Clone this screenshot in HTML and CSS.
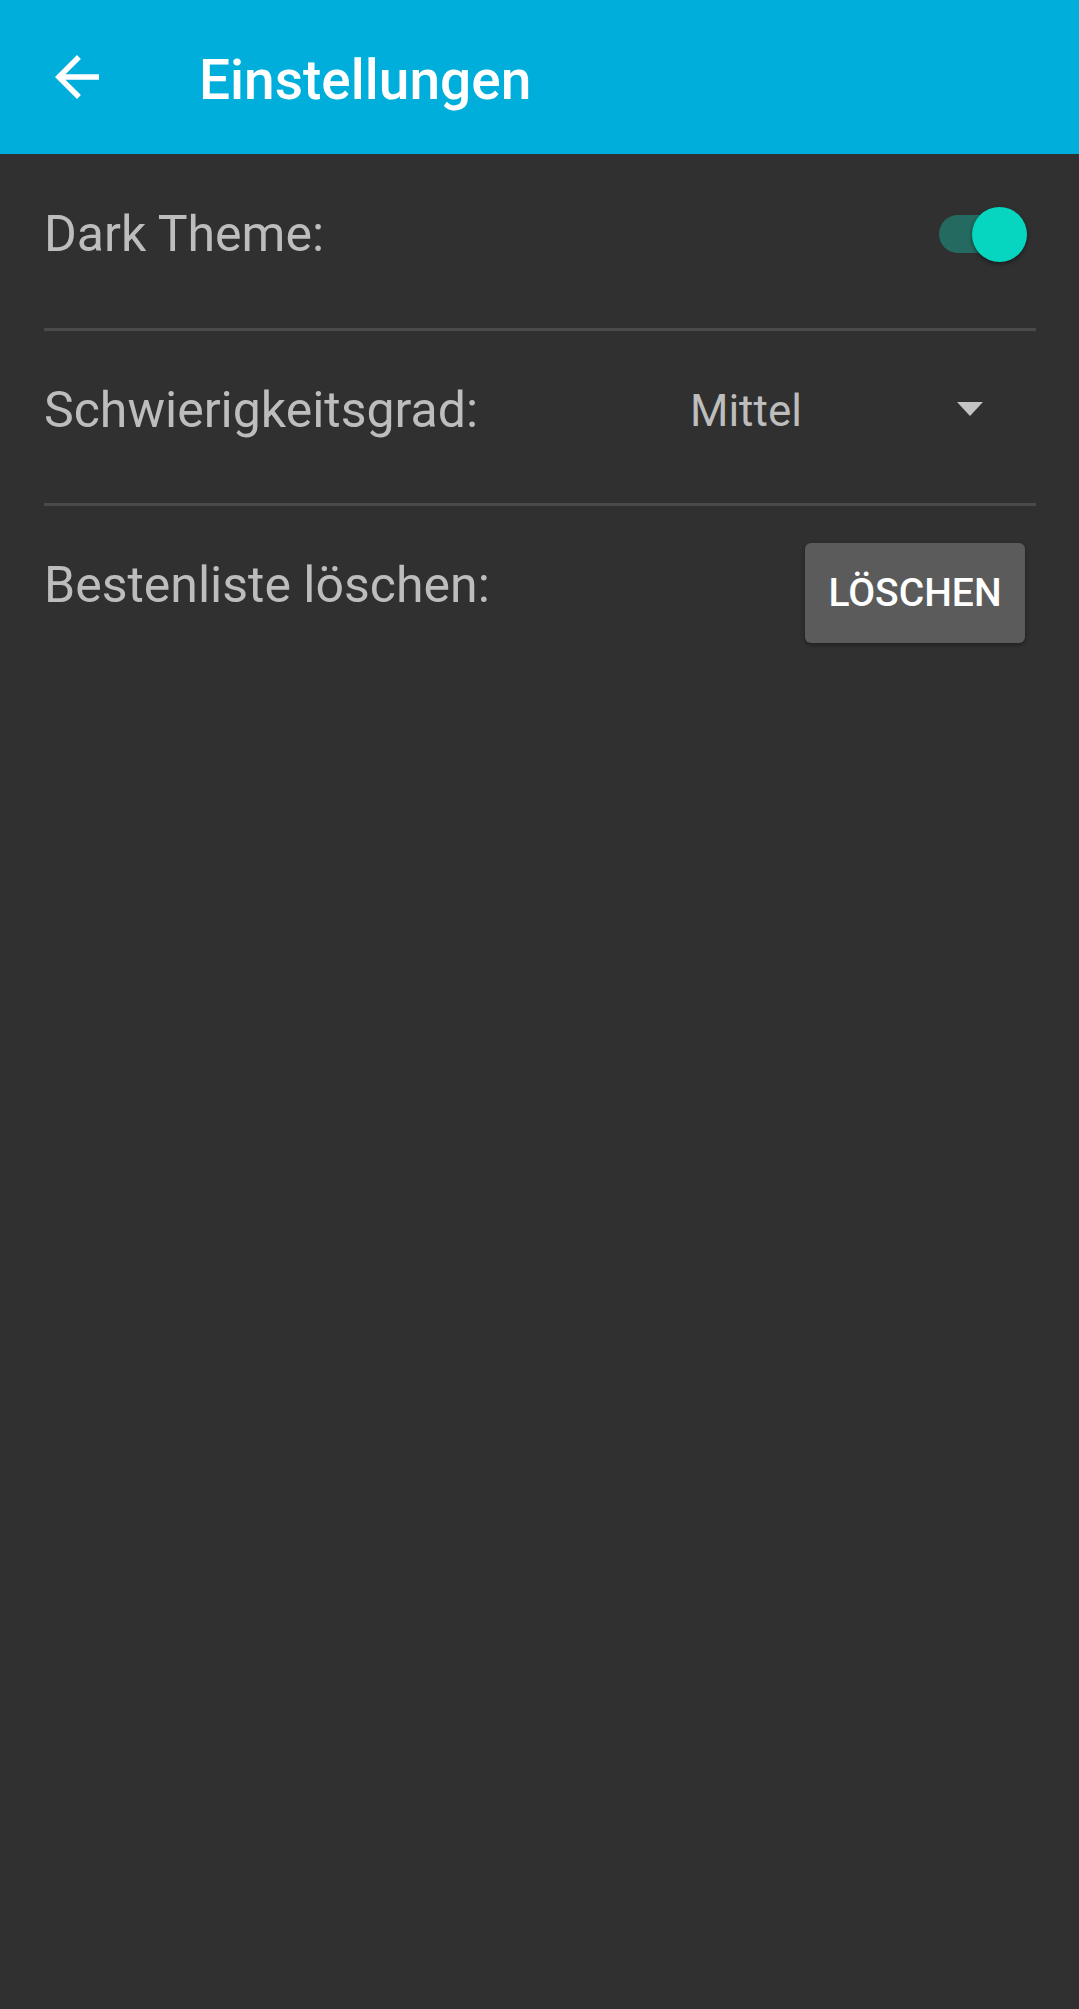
FILE: index.html
```html
<!DOCTYPE html>
<html lang="de">
<head>
<meta charset="utf-8">
<title>Einstellungen</title>
<link rel="stylesheet" href="styles.css">
</head>
<body>
<header class="toolbar">
  <span class="nav-icon">
    <svg viewBox="0 0 24 24" width="66" height="66"><path fill="#ffffff" d="M20 11H7.83l5.59-5.59L12 4l-8 8 8 8 1.41-1.41L7.83 13H20v-2z"/></svg>
  </span>
  <h1 class="title">Einstellungen</h1>
</header>
<main class="settings">
  <div class="row row-center">
    <span class="label">Dark Theme:</span>
    <span class="switch">
      <span class="track"></span>
      <span class="thumb"></span>
    </span>
  </div>
  <div class="row row-center">
    <span class="label">Schwierigkeitsgrad:</span>
    <span class="spinner">
      <span class="spinner-value">Mittel</span>
      <span class="spinner-arrow"></span>
    </span>
  </div>
  <div class="row row-top no-border">
    <span class="label label-top">Bestenliste löschen:</span>
    <button class="btn">LÖSCHEN</button>
  </div>
</main>
</body>
</html>
```

FILE: styles.css
```css
html, body {
  margin: 0;
  padding: 0;
}
body {
  background: #303030;
  font-family: Roboto, "Noto Sans", "Liberation Sans", sans-serif;
  min-height: 2009px;
}
.toolbar {
  height: 154px;
  background: #00aedb;
  display: flex;
  align-items: center;
  padding-left: 44px;
  box-sizing: border-box;
}
.nav-icon {
  width: 66px;
  height: 66px;
  display: block;
}
.nav-icon svg {
  display: block;
}
.title {
  margin: 6px 0 0 89px;
  font-size: 55px;
  font-weight: 500;
  color: #ffffff;
  line-height: normal;
}
.settings {
  padding: 0 43px 0 44px;
}
.row {
  display: flex;
  border-bottom: 3px solid #4a4a4a;
}
.row.no-border {
  border-bottom: none;
}
.row-center {
  align-items: center;
  padding: 51px 0 65px;
  height: 58px;
}
.row-center + .row-center {
  padding-top: 50px;
  padding-bottom: 64px;
}
.row-top {
  align-items: flex-start;
}
.label {
  font-size: 50px;
  color: #bdbdbd;
  line-height: 58px;
  white-space: nowrap;
}
.label-top {
  margin-top: 50px;
}
.switch {
  margin-left: auto;
  margin-right: 9px;
  width: 88px;
  height: 55px;
  position: relative;
  display: block;
}
.track {
  position: absolute;
  left: 0;
  top: 8px;
  width: 82px;
  height: 38px;
  border-radius: 19px;
  background: #256a60;
}
.thumb {
  position: absolute;
  right: 0;
  top: 0;
  width: 55px;
  height: 55px;
  border-radius: 50%;
  background: #06d6c0;
  box-shadow: 0 2px 4px rgba(0, 0, 0, 0.45);
}
.spinner {
  margin-left: auto;
  width: 346px;
  display: flex;
  align-items: center;
  justify-content: space-between;
  padding-right: 53px;
  box-sizing: border-box;
}
.spinner-value {
  font-size: 44px;
  color: #bdbdbd;
  line-height: 52px;
  margin-top: 1px;
}
.spinner-arrow {
  width: 0;
  height: 0;
  border-left: 13px solid transparent;
  border-right: 13px solid transparent;
  border-top: 14px solid #c4c4c4;
  margin-top: -2px;
}
.btn {
  margin: 37px 11px 0 auto;
  width: 220px;
  height: 100px;
  border: none;
  border-radius: 6px;
  background: #5b5b5c;
  color: #ffffff;
  font-family: Roboto, "Noto Sans", "Liberation Sans", sans-serif;
  font-size: 39px;
  font-weight: 500;
  padding: 0;
  box-shadow: 0 2px 4px rgba(0, 0, 0, 0.35);
}
```
